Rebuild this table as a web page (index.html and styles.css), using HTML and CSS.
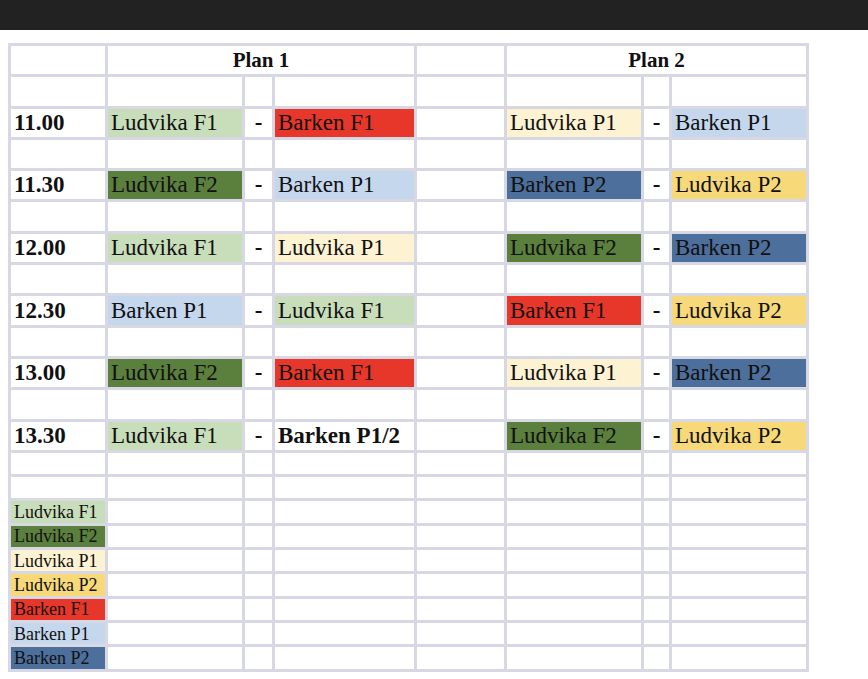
FILE: index.html
```html
<!DOCTYPE html>
<html>
<head>
<meta charset="utf-8">
<link rel="stylesheet" href="styles.css">
</head>
<body>
<div class="topbar"></div>
<div class="wrap">
<table class="sched">
<colgroup>
<col class="c-time"><col class="c-team1"><col class="c-dash"><col class="c-team1b"><col class="c-gap"><col class="c-team2"><col class="c-dash2"><col class="c-team2b">
</colgroup>
<tbody>
<tr class="big"><td></td><td colspan="3" class="head">Plan 1</td><td></td><td colspan="3" class="head">Plan 2</td></tr>
<tr class="big"><td></td><td></td><td></td><td></td><td></td><td></td><td></td><td></td></tr>
<tr class="big"><td class="time">11.00</td><td class="lf1">Ludvika F1</td><td class="dash">-</td><td class="bf1">Barken F1</td><td></td><td class="lp1">Ludvika P1</td><td class="dash">-</td><td class="bp1">Barken P1</td></tr>
<tr class="big"><td></td><td></td><td></td><td></td><td></td><td></td><td></td><td></td></tr>
<tr class="big"><td class="time">11.30</td><td class="lf2">Ludvika F2</td><td class="dash">-</td><td class="bp1">Barken P1</td><td></td><td class="bp2">Barken P2</td><td class="dash">-</td><td class="lp2">Ludvika P2</td></tr>
<tr class="big"><td></td><td></td><td></td><td></td><td></td><td></td><td></td><td></td></tr>
<tr class="big"><td class="time">12.00</td><td class="lf1">Ludvika F1</td><td class="dash">-</td><td class="lp1">Ludvika P1</td><td></td><td class="lf2">Ludvika F2</td><td class="dash">-</td><td class="bp2">Barken P2</td></tr>
<tr class="big"><td></td><td></td><td></td><td></td><td></td><td></td><td></td><td></td></tr>
<tr class="big"><td class="time">12.30</td><td class="bp1">Barken P1</td><td class="dash">-</td><td class="lf1">Ludvika F1</td><td></td><td class="bf1">Barken F1</td><td class="dash">-</td><td class="lp2">Ludvika P2</td></tr>
<tr class="big"><td></td><td></td><td></td><td></td><td></td><td></td><td></td><td></td></tr>
<tr class="big"><td class="time">13.00</td><td class="lf2">Ludvika F2</td><td class="dash">-</td><td class="bf1">Barken F1</td><td></td><td class="lp1">Ludvika P1</td><td class="dash">-</td><td class="bp2">Barken P2</td></tr>
<tr class="big"><td></td><td></td><td></td><td></td><td></td><td></td><td></td><td></td></tr>
<tr class="big"><td class="time">13.30</td><td class="lf1">Ludvika F1</td><td class="dash">-</td><td class="bold">Barken P1/2</td><td></td><td class="lf2">Ludvika F2</td><td class="dash">-</td><td class="lp2">Ludvika P2</td></tr>
<tr class="small"><td></td><td></td><td></td><td></td><td></td><td></td><td></td><td></td></tr>
<tr class="small"><td></td><td></td><td></td><td></td><td></td><td></td><td></td><td></td></tr>
<tr class="small"><td class="leg lf1">Ludvika F1</td><td></td><td></td><td></td><td></td><td></td><td></td><td></td></tr>
<tr class="small"><td class="leg lf2">Ludvika F2</td><td></td><td></td><td></td><td></td><td></td><td></td><td></td></tr>
<tr class="small"><td class="leg lp1">Ludvika P1</td><td></td><td></td><td></td><td></td><td></td><td></td><td></td></tr>
<tr class="small"><td class="leg lp2">Ludvika P2</td><td></td><td></td><td></td><td></td><td></td><td></td><td></td></tr>
<tr class="small"><td class="leg bf1">Barken F1</td><td></td><td></td><td></td><td></td><td></td><td></td><td></td></tr>
<tr class="small"><td class="leg bp1">Barken P1</td><td></td><td></td><td></td><td></td><td></td><td></td><td></td></tr>
<tr class="small"><td class="leg bp2">Barken P2</td><td></td><td></td><td></td><td></td><td></td><td></td><td></td></tr>
</tbody>
</table>
</div>
</body>
</html>
```
FILE: styles.css
```css
html, body {
  margin: 0;
  padding: 0;
  background: #ffffff;
}
body {
  font-family: "Liberation Serif", "Times New Roman", serif;
  color: #111111;
}
.topbar {
  height: 30px;
  background: #222222;
}
.wrap {
  padding: 13px 0 0 8px;
}
.sched {
  border-collapse: collapse;
  table-layout: fixed;
  width: 801px;
}
.sched td {
  border: 3px solid #d8d8e5;
  padding: 0 3px;
  font-size: 23px;
  line-height: 26px;
  white-space: nowrap;
  overflow: hidden;
  vertical-align: middle;
}
.c-time { width: 97px; }
.c-team1 { width: 137px; }
.c-dash { width: 30px; }
.c-team1b { width: 142px; }
.c-gap { width: 90px; }
.c-team2 { width: 137px; }
.c-dash2 { width: 28px; }
.c-team2b { width: 137px; }
.sched tr.big { height: 31.3px; }
.sched tr.small { height: 24.3px; }
.sched td.head {
  text-align: center;
  font-weight: bold;
  font-size: 21px;
}
.sched td.time { font-weight: bold; }
.sched td.bold { font-weight: bold; }
.sched td.dash {
  text-align: center;
  font-weight: bold;
  padding: 0;
}
.sched td.leg {
  font-size: 18px;
  line-height: 20px;
}
.lf1 { background: #c8ddb9; }
.lf2 { background: #5b7f3c; }
.lp1 { background: #fdf2d1; }
.lp2 { background: #f8d97a; }
.bf1 { background: #e7372a; }
.bp1 { background: #c4d7ed; }
.bp2 { background: #4c6f9b; }
```
